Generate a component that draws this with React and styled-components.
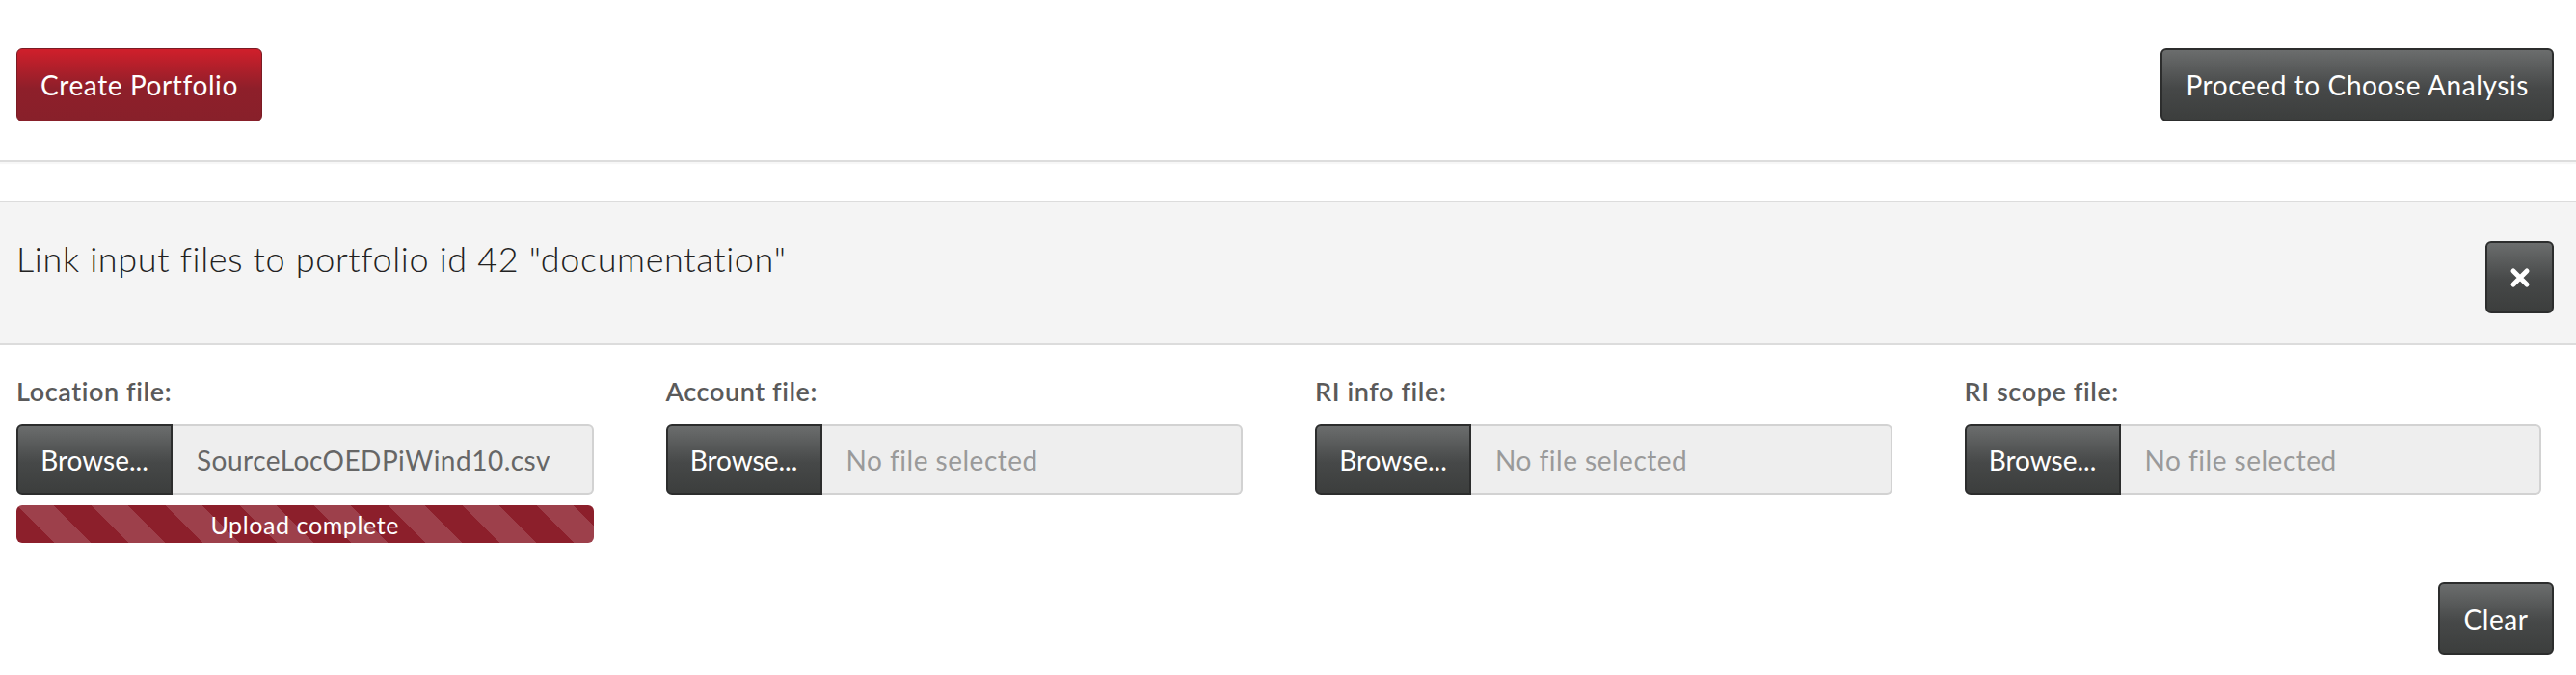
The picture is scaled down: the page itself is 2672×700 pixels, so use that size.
import React from 'react';
import styled, { createGlobalStyle, css } from 'styled-components';

const GlobalStyle = createGlobalStyle`
    body {
        margin: 0;
        background: #ffffff;
        font-family: Lato, "Open Sans", sans-serif;
        color: #333333;
    }
`;

const FILES = [
    { label: 'Location file:', name: 'SourceLocOEDPiWind10.csv', done: true },
    { label: 'Account file:' },
    { label: 'RI info file:' },
    { label: 'RI scope file:' },
];

const ButtonBase = css`
    display: inline-flex;
    align-items: center;
    justify-content: center;
    box-sizing: border-box;
    height: 76px;
    padding: 0 24px;
    border-radius: 6px;
    font-family: inherit;
    font-size: 28px;
    letter-spacing: 0.6px;
    color: #ffffff;
    cursor: pointer;
`;

const RedButton = styled.button`
    ${ButtonBase}
    border: 1px solid #7a1b23;
    background: linear-gradient(to bottom, #d01f2b 0%, #8e1f2a 55%, #88202a 100%);
`;

const DarkButton = styled.button`
    ${ButtonBase}
    border: 2px solid #2c2d2d;
    background: linear-gradient(to bottom, #6b6d6d 0%, #464848 55%, #3c3e3d 100%);
    ${p => p.$square && css`
        width: 71px;
        height: 75px;
        padding: 0;
    `}
    ${p => p.$wide && css`
        width: 120px;
        height: 75px;
        padding: 0;
    `}
`;

const TopBar = styled.div`
    display: flex;
    justify-content: space-between;
    align-items: flex-start;
    padding: 50px 23px 40px 17px;
    border-bottom: 2px solid #dddddd;
    box-shadow: 0 2px 1px rgba(0, 0, 0, 0.03);
`;

const Panel = styled.div`
    display: flex;
    justify-content: space-between;
    align-items: flex-start;
    margin-top: 40px;
    height: 146px;
    box-sizing: content-box;
    padding: 0 23px 0 17px;
    background: #f4f4f4;
    border-top: 2px solid #dcdcdc;
    border-bottom: 2px solid #dcdcdc;
`;

const Title = styled.h3`
    margin: 38px 0 0;
    font-size: 36px;
    line-height: 40px;
    font-weight: 300;
    letter-spacing: 0.65px;
    color: #222222;
`;

const CloseWrap = styled.div`
    margin-top: 40px;
`;

const FieldGrid = styled.div`
    display: grid;
    grid-template-columns: repeat(4, 1fr);
    column-gap: 75px;
    align-items: start;
    padding: 33px 36px 0 17px;
`;

const Field = styled.div`
    display: flex;
    flex-direction: column;
`;

const Label = styled.label`
    font-size: 27px;
    line-height: 30px;
    font-weight: 600;
    letter-spacing: 0.6px;
    color: #5a5a5a;
    margin-bottom: 19px;
`;

const InputGroup = styled.div`
    display: flex;
    height: 73px;
`;

const BrowseButton = styled.div`
    display: flex;
    align-items: center;
    justify-content: center;
    flex: 0 0 162px;
    box-sizing: border-box;
    border: 2px solid #2c2d2d;
    border-radius: 6px 0 0 6px;
    background: linear-gradient(to bottom, #6b6d6d 0%, #464848 55%, #3c3e3d 100%);
    color: #ffffff;
    font-size: 28px;
`;

const FileName = styled.div`
    flex: 1;
    display: flex;
    align-items: center;
    box-sizing: border-box;
    padding-left: 25px;
    background: #eeeeee;
    border: 2px solid #d2d2d2;
    border-left: none;
    border-radius: 0 6px 6px 0;
    font-size: 28px;
    letter-spacing: 0.5px;
    color: ${p => (p.$empty ? '#9a9a9a' : '#666666')};
    white-space: nowrap;
    overflow: hidden;
`;

const Progress = styled.div`
    display: flex;
    align-items: center;
    justify-content: center;
    margin-top: 11px;
    height: 39px;
    border-radius: 6px;
    background-color: #8c1f2b;
    background-image: linear-gradient(
        45deg,
        rgba(255, 255, 255, 0.15) 25%,
        transparent 25%,
        transparent 50%,
        rgba(255, 255, 255, 0.15) 50%,
        rgba(255, 255, 255, 0.15) 75%,
        transparent 75%,
        transparent
    );
    background-size: 77px 77px;
    color: #ffffff;
    font-size: 25px;
    letter-spacing: 0.6px;
`;

const ActionRow = styled.div`
    display: flex;
    justify-content: flex-end;
    padding: 41px 23px 0 17px;
`;

const CloseIcon = () => (
    <svg width="22" height="22" viewBox="0 0 22 22">
        <path d="M4 4 L18 18 M18 4 L4 18" stroke="#ffffff" strokeWidth="5" strokeLinecap="round" />
    </svg>
);

export default function App() {
    return (
        <>
            <GlobalStyle />
            <TopBar>
                <RedButton>Create Portfolio</RedButton>
                <DarkButton>Proceed to Choose Analysis</DarkButton>
            </TopBar>
            <Panel>
                <Title>Link input files to portfolio id 42 "documentation"</Title>
                <CloseWrap>
                    <DarkButton $square>
                        <CloseIcon />
                    </DarkButton>
                </CloseWrap>
            </Panel>
            <FieldGrid>
                {FILES.map(f => (
                    <Field key={f.label}>
                        <Label>{f.label}</Label>
                        <InputGroup>
                            <BrowseButton>Browse...</BrowseButton>
                            <FileName $empty={!f.name}>{f.name || 'No file selected'}</FileName>
                        </InputGroup>
                        {f.done && <Progress>Upload complete</Progress>}
                    </Field>
                ))}
            </FieldGrid>
            <ActionRow>
                <DarkButton $wide>Clear</DarkButton>
            </ActionRow>
        </>
    );
}
